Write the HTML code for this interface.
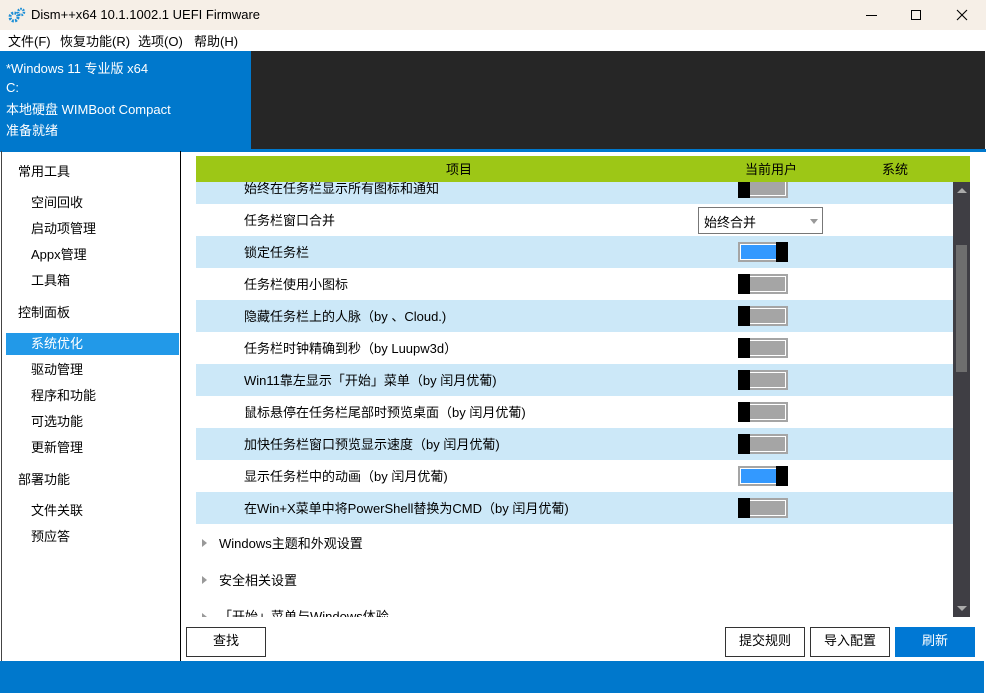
<!DOCTYPE html>
<html><head><meta charset="utf-8"><style>
*{margin:0;padding:0;box-sizing:border-box}
body{width:986px;height:693px;position:relative;overflow:hidden;background:#fff;font-family:"Liberation Sans","Noto Sans CJK SC",sans-serif;font-size:13px;color:#000}
.a{position:absolute}
.tb{left:0;top:0;width:986px;height:30px;background:#f6efe7}
.menu{left:0;top:30px;width:986px;height:21px;background:#fff}
.menu span{position:absolute;top:1px;font-size:13px}
.hd{left:0;top:51px;width:251px;height:99px;background:#0078cc;color:#fff;font-size:13px}
.hd div{position:absolute;left:6px}
.dk{left:251px;top:51px;width:734px;height:99px;background:#262626}
.sep{left:0;top:149px;width:986px;height:3px;background:#0078cc}
.side{left:1px;top:151px;width:180px;height:510px;border-right:1px solid #000;border-left:1px solid #444}
.side div{position:absolute;font-size:13px}
.row{position:absolute;left:196px;width:757px;height:32px}
.row.b{background:#cce8f8}
.row span{position:absolute;left:48px;top:6px}
.tg{position:absolute;left:542px;top:6px;width:50px;height:20px;border:2px solid #a5a5a5;background:#fff;padding:1px}
.tg i{display:block;width:100%;height:100%;background:#a5a5a5}
.tg.on i{background:#3399ff}
.tg b{position:absolute;top:-2px;width:12px;height:20px;background:#000}
.tg.off b{left:-2px}.tg.on b{right:-2px}
.btn{position:absolute;top:627px;height:30px;width:80px;border:1px solid #333;background:#fff;text-align:center;line-height:26px;font-size:13px}
.grp{position:absolute;left:219px;font-size:13px}
.tri{position:absolute;left:202px;width:0;height:0;border-top:4px solid transparent;border-bottom:4px solid transparent;border-left:5px solid #999}
</style></head><body>
<div class="a tb">
<svg class="a" style="left:8px;top:7px" width="18" height="16" viewBox="0 0 18 16"><circle cx="6" cy="10" r="4" fill="none" stroke="#1e8fd6" stroke-width="3" stroke-dasharray="2 1.2"/><circle cx="13" cy="5" r="3" fill="none" stroke="#1e8fd6" stroke-width="2.5" stroke-dasharray="1.6 1"/></svg>
<div class="a" style="left:31px;top:7px;font-size:13px">Dism++x64 10.1.1002.1 UEFI Firmware</div>
<div class="a" style="left:866px;top:15px;width:11px;height:1px;background:#000"></div>
<div class="a" style="left:911px;top:10px;width:10px;height:10px;border:1px solid #000"></div>
<svg class="a" style="left:956px;top:9px" width="12" height="12"><path d="M1 1L11 11M11 1L1 11" stroke="#000" stroke-width="1.1"/></svg>
</div>
<div class="a menu"><span style="left:8px">文件(F)</span><span style="left:60px">恢复功能(R)</span><span style="left:138px">选项(O)</span><span style="left:194px">帮助(H)</span></div>
<div class="a hd"><div style="top:7px">*Windows 11 专业版 x64</div><div style="top:29px">C:</div><div style="top:48px">本地硬盘 WIMBoot Compact</div><div style="top:69px">准备就绪</div></div>
<div class="a dk"></div>
<div class="a sep"></div>
<div class="a side">
<div style="left:16px;top:10px">常用工具</div>
<div style="left:29px;top:41px">空间回收</div>
<div style="left:29px;top:67px">启动项管理</div>
<div style="left:29px;top:93px">Appx管理</div>
<div style="left:29px;top:119px">工具箱</div>
<div style="left:16px;top:151px">控制面板</div>
<div style="left:4px;top:182px;width:173px;height:22px;background:#2299e8"></div>
<div style="left:29px;top:182px;color:#fff">系统优化</div>
<div style="left:29px;top:208px">驱动管理</div>
<div style="left:29px;top:234px">程序和功能</div>
<div style="left:29px;top:260px">可选功能</div>
<div style="left:29px;top:286px">更新管理</div>
<div style="left:16px;top:318px">部署功能</div>
<div style="left:29px;top:349px">文件关联</div>
<div style="left:29px;top:375px">预应答</div>
</div>
<div class="a" style="left:182px;top:152px;width:802px;height:465px;overflow:hidden">
<div class="row b" style="top:20px;left:14px;height:32px"><span style="top:6px">始终在任务栏显示所有图标和通知</span><div class="tg off" style="top:6px"><i></i><b></b></div></div>
<div class="row" style="top:52px;left:14px"><span>任务栏窗口合并</span><div style="position:absolute;left:502px;top:3px;width:125px;height:27px;border:1px solid #777;background:#fff"><span style="left:5px;top:4px">始终合并</span><div style="position:absolute;right:4px;top:11px;border-left:4px solid transparent;border-right:4px solid transparent;border-top:5px solid #999"></div></div></div>
<div class="row b" style="top:84px;left:14px"><span>锁定任务栏</span><div class="tg on"><i></i><b></b></div></div>
<div class="row" style="top:116px;left:14px"><span>任务栏使用小图标</span><div class="tg off"><i></i><b></b></div></div>
<div class="row b" style="top:148px;left:14px"><span>隐藏任务栏上的人脉（by 、Cloud.)</span><div class="tg off"><i></i><b></b></div></div>
<div class="row" style="top:180px;left:14px"><span>任务栏时钟精确到秒（by Luupw3d）</span><div class="tg off"><i></i><b></b></div></div>
<div class="row b" style="top:212px;left:14px"><span>Win11靠左显示「开始」菜单（by 闰月优葡)</span><div class="tg off"><i></i><b></b></div></div>
<div class="row" style="top:244px;left:14px"><span>鼠标悬停在任务栏尾部时预览桌面（by 闰月优葡)</span><div class="tg off"><i></i><b></b></div></div>
<div class="row b" style="top:276px;left:14px"><span>加快任务栏窗口预览显示速度（by 闰月优葡)</span><div class="tg off"><i></i><b></b></div></div>
<div class="row" style="top:308px;left:14px"><span>显示任务栏中的动画（by 闰月优葡)</span><div class="tg on"><i></i><b></b></div></div>
<div class="row b" style="top:340px;left:14px"><span>在Win+X菜单中将PowerShell替换为CMD（by 闰月优葡)</span><div class="tg off"><i></i><b></b></div></div>
<div class="tri" style="left:20px;top:387px"></div><div class="grp" style="left:37px;top:381px">Windows主题和外观设置</div>
<div class="tri" style="left:20px;top:424px"></div><div class="grp" style="left:37px;top:418px">安全相关设置</div>
<div class="tri" style="left:20px;top:461px"></div><div class="grp" style="left:37px;top:454px">「开始」菜单与Windows体验</div>
</div>
<div class="a" style="left:196px;top:156px;width:774px;height:26px;background:#9dc716"><span class="a" style="left:250px;top:3px">项目</span><span class="a" style="left:549px;top:3px">当前用户</span><span class="a" style="left:686px;top:3px">系统</span></div>
<div class="a" style="left:953px;top:182px;width:17px;height:435px;background:#3f3e44"><div class="a" style="left:3px;top:63px;width:11px;height:127px;background:#6e6e6e"></div><div class="a" style="left:4px;top:6px;border-left:5px solid transparent;border-right:5px solid transparent;border-bottom:5px solid #aaa"></div><div class="a" style="left:4px;top:424px;border-left:5px solid transparent;border-right:5px solid transparent;border-top:5px solid #aaa"></div></div>
<div class="btn" style="left:186px">查找</div>
<div class="btn" style="left:725px">提交规则</div>
<div class="btn" style="left:810px">导入配置</div>
<div class="btn" style="left:895px;background:#0078d4;border-color:#0078d4;color:#fff">刷新</div>
<div class="a" style="left:0;top:661px;width:984px;height:32px;background:#0078cc"></div>
</body></html>
